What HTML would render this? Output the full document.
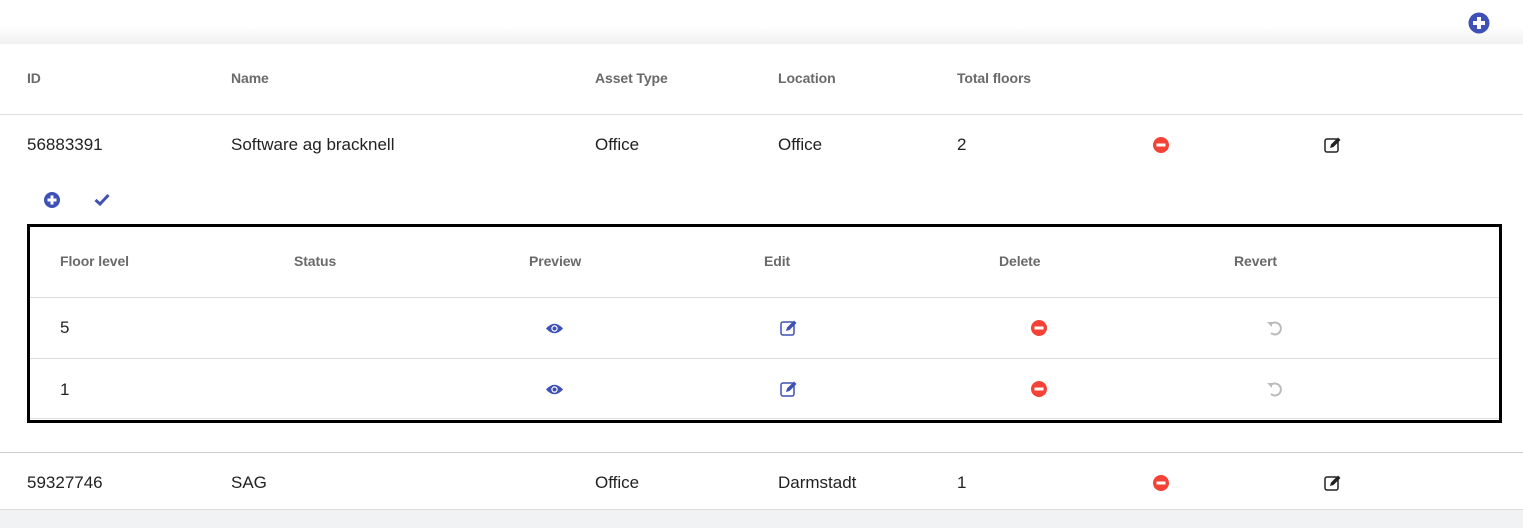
<!DOCTYPE html>
<html><head><style>
body{margin:0;width:1523px;height:527px;position:relative;background:#fff;font-family:"Liberation Sans",sans-serif;overflow:hidden}
.a{position:absolute}
.h{position:absolute;font-size:14px;color:#6a6a6a;font-weight:bold;transform:translateY(-50%);letter-spacing:-0.1px}
.t{position:absolute;font-size:17px;color:#222;transform:translateY(-50%)}
.ln{position:absolute;height:1px;background:#ddd}
svg{position:absolute}
</style></head><body>
<div class="a" style="left:0;top:0;width:1523px;height:44px;background:linear-gradient(#fff 0,#fff 26px,#f1f1f1 43px)"></div>
<svg style="left:1468px;top:12px" width="22" height="22" viewBox="0 0 22 22"><circle cx="11" cy="11" r="10.5" fill="#3f51b5"/><rect x="5" y="9" width="12" height="4" fill="#fff"/><rect x="9" y="5" width="4" height="12" fill="#fff"/></svg>

<div class="h" style="left:27px;top:78px">ID</div>
<div class="h" style="left:231px;top:78px">Name</div>
<div class="h" style="left:595px;top:78px">Asset Type</div>
<div class="h" style="left:778px;top:78px">Location</div>
<div class="h" style="left:957px;top:78px">Total floors</div>
<div class="ln" style="left:0;top:114px;width:1523px"></div>

<div class="t" style="left:27px;top:145px">56883391</div>
<div class="t" style="left:231px;top:145px">Software ag bracknell</div>
<div class="t" style="left:595px;top:145px">Office</div>
<div class="t" style="left:778px;top:145px">Office</div>
<div class="t" style="left:957px;top:145px">2</div>
<svg style="left:1153px;top:137px" width="16" height="16" viewBox="0 0 16 16"><circle cx="8" cy="8" r="8" fill="#f44336"/><rect x="3.5" y="6.5" width="9" height="3" fill="#fff"/></svg>
<svg style="left:1324px;top:136px" width="18" height="17" viewBox="0 0 18 17"><rect x="1" y="3" width="13" height="13" rx="2" fill="none" stroke="#222" stroke-width="1.5"/><path d="M6 12 L7 8.5 L14 1.5 L16.5 4 L9.5 11 Z" fill="#222"/></svg>

<svg style="left:44px;top:192px" width="16" height="16" viewBox="0 0 16 16"><circle cx="8" cy="8" r="8" fill="#3f51b5"/><rect x="3.5" y="6.5" width="9" height="3" fill="#fff"/><rect x="6.5" y="3.5" width="3" height="9" fill="#fff"/></svg>
<svg style="left:94px;top:193px" width="16" height="13" viewBox="0 0 16 13"><path d="M1.5 7 L6 11 L14.5 2" fill="none" stroke="#3f51b5" stroke-width="3"/></svg>

<div class="a" style="left:27px;top:224px;width:1475px;height:199px;border:3px solid #000;box-sizing:border-box"></div>
<div class="h" style="left:60px;top:261px">Floor level</div>
<div class="h" style="left:294px;top:261px">Status</div>
<div class="h" style="left:529px;top:261px">Preview</div>
<div class="h" style="left:764px;top:261px">Edit</div>
<div class="h" style="left:999px;top:261px">Delete</div>
<div class="h" style="left:1234px;top:261px">Revert</div>
<div class="ln" style="left:30px;top:297px;width:1469px"></div>
<div class="ln" style="left:30px;top:358px;width:1469px"></div>
<div class="ln" style="left:30px;top:418px;width:1469px"></div>

<div class="t" style="left:60px;top:328px">5</div>
<div class="t" style="left:60px;top:390px">1</div>

<svg style="left:545px;top:322px" width="19" height="13" viewBox="0 0 19 13"><path d="M1 6.5 Q9.5 -3 18 6.5 Q9.5 16 1 6.5 Z" fill="#3f51b5"/><circle cx="9.5" cy="6.5" r="3.2" fill="#fff"/><circle cx="9.5" cy="6.5" r="2" fill="#3f51b5"/></svg>
<svg style="left:545px;top:383px" width="19" height="13" viewBox="0 0 19 13"><path d="M1 6.5 Q9.5 -3 18 6.5 Q9.5 16 1 6.5 Z" fill="#3f51b5"/><circle cx="9.5" cy="6.5" r="3.2" fill="#fff"/><circle cx="9.5" cy="6.5" r="2" fill="#3f51b5"/></svg>
<svg style="left:780px;top:319px" width="18" height="17" viewBox="0 0 18 17"><rect x="1" y="3" width="13" height="13" rx="2" fill="none" stroke="#3f51b5" stroke-width="1.5"/><path d="M6 12 L7 8.5 L14 1.5 L16.5 4 L9.5 11 Z" fill="#3f51b5"/></svg>
<svg style="left:780px;top:380px" width="18" height="17" viewBox="0 0 18 17"><rect x="1" y="3" width="13" height="13" rx="2" fill="none" stroke="#3f51b5" stroke-width="1.5"/><path d="M6 12 L7 8.5 L14 1.5 L16.5 4 L9.5 11 Z" fill="#3f51b5"/></svg>
<svg style="left:1031px;top:320px" width="16" height="16" viewBox="0 0 16 16"><circle cx="8" cy="8" r="8" fill="#f44336"/><rect x="3.5" y="6.5" width="9" height="3" fill="#fff"/></svg>
<svg style="left:1031px;top:381px" width="16" height="16" viewBox="0 0 16 16"><circle cx="8" cy="8" r="8" fill="#f44336"/><rect x="3.5" y="6.5" width="9" height="3" fill="#fff"/></svg>
<svg style="left:1266px;top:320px" width="16" height="16" viewBox="0 0 16 16"><path d="M4 5 A6 6 0 1 1 5 13" fill="none" stroke="#bbb" stroke-width="2"/><path d="M1 2 L6 2 L6 7 Z" fill="#bbb"/></svg>
<svg style="left:1266px;top:381px" width="16" height="16" viewBox="0 0 16 16"><path d="M4 5 A6 6 0 1 1 5 13" fill="none" stroke="#bbb" stroke-width="2"/><path d="M1 2 L6 2 L6 7 Z" fill="#bbb"/></svg>

<div class="ln" style="left:0;top:452px;width:1523px;background:#ccc"></div>
<div class="t" style="left:27px;top:483px">59327746</div>
<div class="t" style="left:231px;top:483px">SAG</div>
<div class="t" style="left:595px;top:483px">Office</div>
<div class="t" style="left:778px;top:483px">Darmstadt</div>
<div class="t" style="left:957px;top:483px">1</div>
<svg style="left:1153px;top:475px" width="16" height="16" viewBox="0 0 16 16"><circle cx="8" cy="8" r="8" fill="#f44336"/><rect x="3.5" y="6.5" width="9" height="3" fill="#fff"/></svg>
<svg style="left:1324px;top:474px" width="18" height="17" viewBox="0 0 18 17"><rect x="1" y="3" width="13" height="13" rx="2" fill="none" stroke="#222" stroke-width="1.5"/><path d="M6 12 L7 8.5 L14 1.5 L16.5 4 L9.5 11 Z" fill="#222"/></svg>
<div class="a" style="left:0;top:509px;width:1523px;height:18px;background:#f1f2f4;border-top:1px solid #ddd"></div>
</body></html>
